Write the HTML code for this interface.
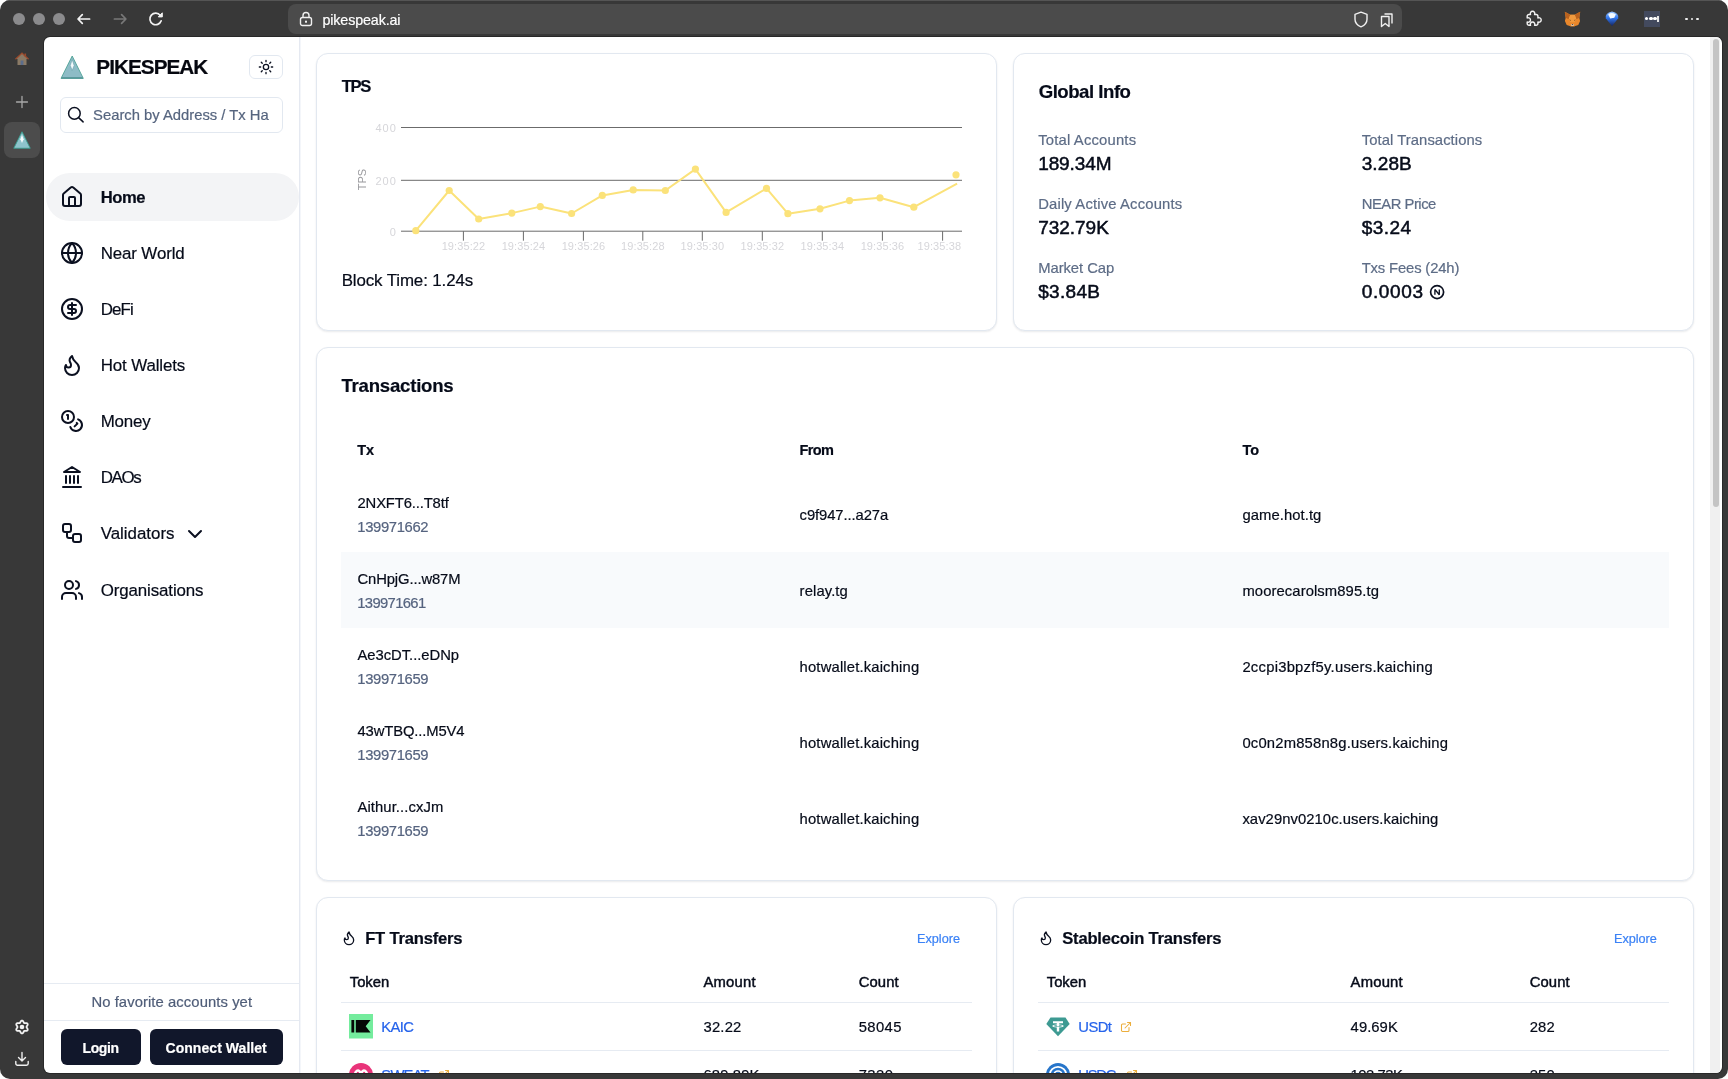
<!DOCTYPE html>
<html lang="en"><head><meta charset="utf-8"><title>Pikespeak</title>
<style>
*{box-sizing:border-box}
html,body{margin:0;padding:0;background:#fff}
body{width:1728px;height:1079px;overflow:hidden;position:relative;font-family:"Liberation Sans",sans-serif;color:#0b1020}
.abs{position:absolute}
.t{position:absolute;white-space:nowrap;line-height:20px;-webkit-text-stroke:0.2px currentColor}
.win{will-change:transform;position:absolute;left:0;top:0;width:1728px;height:1079px;background:#383838;border-radius:10px;overflow:hidden}
.page{position:absolute;left:44px;top:37px;width:1678px;height:1036px;background:#fff;border-radius:6px;overflow:hidden;box-shadow:0 0 0 1px rgba(0,0,0,.28)}
.card{position:absolute;background:#fff;border:1px solid #e2e8f0;border-radius:12px;box-shadow:0 1px 2px rgba(15,23,42,.09)}
.hl{position:absolute;height:1px;background:#e6ebf2}
svg{position:absolute;overflow:visible}
.ic{fill:none;stroke:#0b1020;stroke-width:2;stroke-linecap:round;stroke-linejoin:round}
.btn{position:absolute;background:#11172b;border-radius:6px;height:35.800px;top:1029.100px}

</style></head>
<body>
<div class="win">
<header>
<div class="abs" style="left:0;top:0;width:1728px;height:1px;background:#555"></div>
<div class="abs" style="left:13px;top:13px;width:12px;height:12px;border-radius:50%;background:#8b8b8d"></div>
<div class="abs" style="left:33px;top:13px;width:12px;height:12px;border-radius:50%;background:#8b8b8d"></div>
<div class="abs" style="left:53px;top:13px;width:12px;height:12px;border-radius:50%;background:#8b8b8d"></div>
<svg style="left:74px;top:10px" width="18" height="18" viewBox="0 0 18 18"><path d="M15.600 9H4.200M8.300 4.700 4 9l4.300 4.300" fill="none" stroke="#f2f2f2" stroke-width="1.700" stroke-linecap="round" stroke-linejoin="round"/></svg>
<svg style="left:111px;top:10px" width="18" height="18" viewBox="0 0 18 18"><path d="M3.400 9h11.300M10.600 4.700 14.900 9l-4.300 4.300" fill="none" stroke="#787878" stroke-width="1.700" stroke-linecap="round" stroke-linejoin="round"/></svg>
<svg style="left:146px;top:10px" width="18" height="18" viewBox="0 0 18 18"><path d="M14.300 5.400A5.800 5.800 0 1 0 15.200 10.800" fill="none" stroke="#f2f2f2" stroke-width="1.700" stroke-linecap="round"/><path d="M16.300 2.800V6.900H12.300z" fill="#f2f2f2" stroke="#f2f2f2" stroke-width="1" stroke-linejoin="round"/></svg>
<div class="abs" style="left:288px;top:4px;width:1114px;height:30px;border-radius:8px;background:#4b4b4b"></div>
<svg style="left:299px;top:11px" width="14" height="16" viewBox="0 0 14 16"><rect x="1.500" y="6.500" width="11" height="8" rx="2" fill="none" stroke="#f0f0f0" stroke-width="1.400"/><path d="M4 6.500V4.500a3 3 0 0 1 6 0v2" fill="none" stroke="#f0f0f0" stroke-width="1.400"/><rect x="6" y="9.700" width="2" height="2" fill="#f0f0f0"/></svg>
<span class="t" style="left:322.40px;top:10px;font-size:14.3px;color:#ffffff;letter-spacing:-0.121px;">pikespeak.ai</span>
<svg style="left:1353px;top:11px" width="16" height="17" viewBox="0 0 16 17"><path d="M8 1.200 14 3.400v4.800c0 3.600-2.500 6.200-6 7.600-3.500-1.400-6-4-6-7.600V3.400z" fill="none" stroke="#f0f0f0" stroke-width="1.400" stroke-linejoin="round"/></svg>
<svg style="left:1379px;top:11px" width="16" height="17" viewBox="0 0 16 17"><path d="M2.500 5.500h7.500v10l-3.750-3-3.750 3z" fill="none" stroke="#f0f0f0" stroke-width="1.400" stroke-linejoin="round"/><path d="M5.500 3h7.500v9.500" fill="none" stroke="#f0f0f0" stroke-width="1.400" stroke-linejoin="round"/></svg>
<svg style="left:1526.200px;top:10.800px" width="15.500" height="15.500" viewBox="2 2 13 13"><path d="M3 6.500a1.500 1.500 0 0 1 1.500-1.500H5.800a1.900 1.900 0 1 1 3.400 0H10.500a1.500 1.500 0 0 1 1.500 1.500V7.800a1.900 1.900 0 1 1 0 3.400V12.500a1.500 1.500 0 0 1-1.500 1.500H9.200a1.900 1.900 0 1 0-3.400 0H4.500a1.500 1.500 0 0 1-1.500-1.500V11.200a1.900 1.900 0 1 0 0-3.400Z" fill="none" stroke="#f2f2f2" stroke-width="1.200" stroke-linejoin="round"/></svg>
<svg style="left:1563.500px;top:11px" width="17" height="16" viewBox="0 0 17 16"><path d="M.800 .800 6.300 3.800h4.400L16.200 .800l-.900 6 .800 3.200-1.800 4-3 .900-1 .700H6.700l-1-.700-3-.900L.900 10l.800-3.200z" fill="#e9872b"/><path d="M.800 .800 6.300 3.800 4.600 8.300 1.700 6.800zM16.200 .800 10.700 3.800l1.700 4.500 2.900-1.500z" fill="#b9621f"/><path d="M6.300 3.800h4.400l1.700 4.500-1.900 3H6.500l-1.900-3z" fill="#f09a3e"/><path d="M5.200 8.600l1.700.400-.500.900zM11.800 8.600l-1.700.400.500.900z" fill="#7a4a22"/><path d="M6.800 13.300h3.400l-.500 1.500H7.300z" fill="#dfd3c3"/><path d="M7.700 13.200h1.600l-.300.800h-1z" fill="#222"/></svg>
<svg style="left:1605px;top:11px" width="14" height="15.500" viewBox="0 0 14 15.500"><defs><linearGradient id="gd" x1="0" y1="0" x2="0" y2="1"><stop offset="0" stop-color="#9cc8ff"/><stop offset=".45" stop-color="#2f74ec"/><stop offset="1" stop-color="#16245c"/></linearGradient></defs><path d="M7 15.200 .800 7.200Q-.300 2.200 7 .500 14.300 2.200 13.200 7.200z" fill="url(#gd)"/><path d="M3.200 3.500Q6 .800 10.800 3.200L9.300 6.800 5.200 7.400z" fill="#f3faff"/></svg>
<div class="abs" style="left:1644px;top:11px;width:16px;height:15.500px;background:#434a5e"></div>
<div class="abs" style="left:1645.35px;top:17.350px;width:3.100px;height:3.100px;border-radius:50%;background:#fff"></div>
<div class="abs" style="left:1649.45px;top:17.350px;width:3.100px;height:3.100px;border-radius:50%;background:#fff"></div>
<div class="abs" style="left:1653.45px;top:17.350px;width:3.100px;height:3.100px;border-radius:50%;background:#fff"></div>
<div class="abs" style="left:1657.300px;top:15.900px;width:2.200px;height:5.900px;background:#e6e6e6"></div>
<div class="abs" style="left:1685.4px;top:17.700px;width:2.600px;height:2.600px;border-radius:50%;background:#f0f0f0"></div>
<div class="abs" style="left:1690.7px;top:17.700px;width:2.600px;height:2.600px;border-radius:50%;background:#f0f0f0"></div>
<div class="abs" style="left:1696.0px;top:17.700px;width:2.600px;height:2.600px;border-radius:50%;background:#f0f0f0"></div>
</header>
<div class="strip">
<div class="abs" style="left:4px;top:122px;width:36px;height:36px;border-radius:8px;background:#4c4c4c"></div>
<svg style="left:14px;top:51px" width="16" height="16" viewBox="0 0 16 16"><path d="M8 2 1.500 8h2v6h9V8h2z" fill="#8a7a66"/><path d="M8 1.300 1 7.800l.900.900L8 3l6.100 5.700.900-.900z" fill="#9a4a2c"/><rect x="6.600" y="9.500" width="2.800" height="4.500" fill="#5b6d8c"/><rect x="10.500" y="2.500" width="1.600" height="3" fill="#9a4a2c"/></svg>
<svg style="left:15px;top:95px" width="14" height="14" viewBox="0 0 14 14"><path d="M7 1.500v11M1.500 7h11" stroke="#a8a8a8" stroke-width="1.300" fill="none" stroke-linecap="round"/></svg>
<svg style="left:13px;top:131px" width="18" height="18" viewBox="0 0 24 24"><path d="M12 1 23 23H1z" fill="#8ec4cc" stroke="#3a9d8f" stroke-width="1.200"/><path d="M12 5l2.200 6-2.200 5-2.200-5z" fill="#f4fbfc"/></svg>
<svg style="left:14px;top:1019.100px" width="16" height="16" viewBox="0 0 16 16"><path d="M8.00 1.55 L8.55 1.70 L9.04 2.12 L9.42 2.69 L9.72 3.28 L9.98 3.76 L10.27 4.06 L10.68 4.17 L11.23 4.15 L11.89 4.11 L12.58 4.16 L13.18 4.37 L13.59 4.77 L13.73 5.33 L13.61 5.96 L13.31 6.58 L12.95 7.13 L12.66 7.59 L12.55 8.00 L12.66 8.41 L12.95 8.87 L13.31 9.42 L13.61 10.04 L13.73 10.67 L13.59 11.22 L13.18 11.63 L12.58 11.84 L11.89 11.89 L11.23 11.85 L10.68 11.83 L10.28 11.94 L9.98 12.24 L9.72 12.72 L9.42 13.31 L9.04 13.88 L8.55 14.30 L8.00 14.45 L7.45 14.30 L6.96 13.88 L6.58 13.31 L6.28 12.72 L6.02 12.24 L5.72 11.94 L5.32 11.83 L4.77 11.85 L4.11 11.89 L3.42 11.84 L2.82 11.63 L2.41 11.23 L2.27 10.67 L2.39 10.04 L2.69 9.42 L3.05 8.87 L3.34 8.41 L3.45 8.00 L3.34 7.59 L3.05 7.13 L2.69 6.58 L2.39 5.96 L2.27 5.33 L2.41 4.78 L2.82 4.37 L3.42 4.16 L4.11 4.11 L4.77 4.15 L5.32 4.17 L5.73 4.06 L6.02 3.76 L6.28 3.28 L6.58 2.69 L6.96 2.12 L7.45 1.70Z" fill="none" stroke="#f2f2f2" stroke-width="1.800" stroke-linejoin="round"/><circle cx="8" cy="8" r="2.300" fill="#f2f2f2"/></svg>
<svg style="left:14px;top:1051px" width="16" height="16" viewBox="0 0 16 16"><path d="M8 1.500v8.500M4.500 6.500 8 10l3.500-3.500M1.800 10.500v2a1.700 1.700 0 0 0 1.700 1.700h9a1.700 1.700 0 0 0 1.700-1.700v-2" fill="none" stroke="#f0f0f0" stroke-width="1.400" stroke-linecap="round" stroke-linejoin="round"/></svg>
</div>
<div class="page"><div class="abs" style="left:-44px;top:-37px;width:1728px;height:1079px">
<aside>
<div class="abs" style="left:299px;top:37px;width:1px;height:1036px;background:#e5e9f1"></div>
<div class="abs" style="left:300px;top:37px;width:1px;height:1036px;background:#f4f6fa"></div>
<svg style="left:60px;top:55px" width="24" height="24" viewBox="0 0 24 24"><path d="M12.200 1 23.300 23.400H1z" fill="#8dbcc6" stroke="#3f9a8c" stroke-width=".8" stroke-linejoin="round"/><path d="M2 22.200h20.400l.700 1.300H1.200z" fill="#4c8f92"/><path d="M12.200 4.500l1.900 6-1.900 5-1.900-5z" fill="#f4fafc" stroke="#5d98a2" stroke-width=".5"/></svg>
<span class="t" style="left:96.30px;top:57px;font-size:20.7px;color:#05070f;font-weight:700;letter-spacing:-0.948px;">PIKESPEAK</span>
<div class="abs" style="left:249px;top:55px;width:34px;height:24px;border:1px solid #e2e8f0;border-radius:6px;background:#fff"></div>
<svg class="ic" style="left:258px;top:59px;stroke-width:2" width="16" height="16" viewBox="0 0 24 24"><circle cx="12" cy="12" r="4"/><path d="M12 2v2M12 20v2M4.930 4.930l1.410 1.410M17.660 17.660l1.410 1.410M2 12h2M20 12h2M6.340 17.660l-1.410 1.410M19.070 4.930l-1.410 1.410"/></svg>
<div class="abs" style="left:60px;top:97px;width:223px;height:36px;border:1px solid #e2e8f0;border-radius:6px;background:#fff"></div>
<svg style="left:60px;top:100px" width="30" height="30" viewBox="0 0 30 30"><circle cx="14.400" cy="13.400" r="5.800" fill="none" stroke="#0b1020" stroke-width="1.500"/><path d="M18.600 17.600 23.100 21.900" fill="none" stroke="#0b1020" stroke-width="1.500" stroke-linecap="round"/></svg>
<span class="t" style="left:93.10px;top:105px;font-size:14.8px;color:#56657f;letter-spacing:-0.006px;">Search by Address / Tx Ha</span>
<nav>
<div class="abs" style="left:46px;top:173px;width:253px;height:48px;border-radius:24px;background:#f3f4f6"></div>
<svg class="ic" style="left:60px;top:185.0px" width="24" height="24" viewBox="0 0 24 24"><path d="M15 21v-8a1 1 0 0 0-1-1h-4a1 1 0 0 0-1 1v8"/><path d="M3 10a2 2 0 0 1 .709-1.528l7-5.999a2 2 0 0 1 2.582 0l7 5.999A2 2 0 0 1 21 10v9a2 2 0 0 1-2 2H5a2 2 0 0 1-2-2z"/></svg>
<span class="t" style="left:100.70px;top:188px;font-size:16.6px;color:#060b19;font-weight:700;letter-spacing:-0.427px;">Home</span>
<svg class="ic" style="left:60px;top:241.0px" width="24" height="24" viewBox="0 0 24 24"><circle cx="12" cy="12" r="10"/><path d="M12 2a14.500 14.500 0 0 0 0 20 14.500 14.500 0 0 0 0-20"/><path d="M2 12h20"/></svg>
<span class="t" style="left:100.70px;top:244px;font-size:16.9px;color:#060b19;letter-spacing:-0.125px;">Near World</span>
<svg class="ic" style="left:60px;top:296.9px" width="24" height="24" viewBox="0 0 24 24"><circle cx="12" cy="12" r="10"/><path d="M16 8h-6a2 2 0 1 0 0 4h4a2 2 0 1 1 0 4H8"/><path d="M12 18V6"/></svg>
<span class="t" style="left:100.70px;top:300px;font-size:16.9px;color:#060b19;letter-spacing:-0.859px;">DeFi</span>
<svg class="ic" style="left:60px;top:353.1px" width="24" height="24" viewBox="0 0 24 24"><path d="M8.500 14.500A2.500 2.500 0 0 0 11 12c0-1.380-.500-2-1-3-1.072-2.143-.224-4.054 2-6 .500 2.500 2 4.900 4 6.500 2 1.600 3 3.500 3 5.500a7 7 0 1 1-14 0c0-1.153.433-2.294 1-3a2.500 2.500 0 0 0 2.500 2.500z"/></svg>
<span class="t" style="left:100.70px;top:356px;font-size:16.9px;color:#060b19;letter-spacing:-0.115px;">Hot Wallets</span>
<svg class="ic" style="left:60px;top:408.9px" width="24" height="24" viewBox="0 0 24 24"><circle cx="8" cy="8" r="6"/><path d="M18.090 10.370A6 6 0 1 1 10.340 18"/><path d="M7 6h1v4"/><path d="m16.710 13.880.700.710-2.820 2.820"/></svg>
<span class="t" style="left:100.70px;top:412px;font-size:16.9px;color:#060b19;letter-spacing:-0.181px;">Money</span>
<svg class="ic" style="left:60px;top:465.0px" width="24" height="24" viewBox="0 0 24 24"><path d="M3 22h18M6 18v-7M10 18v-7M14 18v-7M18 18v-7"/><path d="M12 2l8 5H4z"/></svg>
<span class="t" style="left:100.70px;top:468px;font-size:16.9px;color:#060b19;letter-spacing:-1.356px;">DAOs</span>
<svg class="ic" style="left:60px;top:520.8px" width="24" height="24" viewBox="0 0 24 24"><rect width="8" height="8" x="3" y="3" rx="2"/><path d="M7 11v4a2 2 0 0 0 2 2h4"/><rect width="8" height="8" x="13" y="13" rx="2"/></svg>
<span class="t" style="left:100.70px;top:524px;font-size:16.9px;color:#060b19;letter-spacing:-0.007px;">Validators</span>
<svg class="ic" style="left:60px;top:577.8px" width="24" height="24" viewBox="0 0 24 24"><path d="M16 21v-2a4 4 0 0 0-4-4H6a4 4 0 0 0-4 4v2"/><circle cx="9" cy="7" r="4"/><path d="M22 21v-2a4 4 0 0 0-3-3.870"/><path d="M16 3.130a4 4 0 0 1 0 7.750"/></svg>
<span class="t" style="left:100.70px;top:581px;font-size:16.9px;color:#060b19;letter-spacing:-0.115px;">Organisations</span>
<svg class="ic" style="left:183.300px;top:522.300px" width="24" height="24" viewBox="0 0 24 24"><path d="m6 9 6 6 6-6"/></svg>
</nav>
<div class="hl" style="left:44px;top:983px;width:255px"></div>
<span class="t" style="left:91.40px;top:992px;font-size:14.8px;color:#4f5d78;letter-spacing:0.083px;">No favorite accounts yet</span>
<div class="hl" style="left:44px;top:1020px;width:255px"></div>
<div class="btn" style="left:60.600px;width:80.600px"></div>
<div class="btn" style="left:149.900px;width:133px"></div>
<span class="t" style="left:82.60px;top:1038px;font-size:14.0px;color:#ffffff;font-weight:700;letter-spacing:-0.431px;">Login</span>
<span class="t" style="left:165.50px;top:1038px;font-size:14.0px;color:#ffffff;font-weight:700;letter-spacing:0.052px;">Connect Wallet</span>
</aside>
<main>
<div class="card" style="left:316px;top:53px;width:681px;height:278px"></div>
<div class="card" style="left:1013px;top:53px;width:681px;height:278px"></div>
<div class="card" style="left:316px;top:347px;width:1378px;height:534px"></div>
<div class="card" style="left:316px;top:897px;width:681px;height:300px"></div>
<div class="card" style="left:1013px;top:897px;width:681px;height:300px"></div>
<section>
<span class="t" style="left:341.70px;top:77px;font-size:16.6px;color:#060b19;font-weight:700;letter-spacing:-1.313px;">TPS</span>
<span class="t" style="left:341.70px;top:271px;font-size:16.9px;color:#060b19;letter-spacing:-0.114px;">Block Time: 1.24s</span>
<svg style="left:0;top:0" width="1728" height="1079" viewBox="0 0 1728 1079"><path d="M401 127.5H962" stroke="#6b6b6b" stroke-width="1" fill="none"/><path d="M401 180.3H962" stroke="#6b6b6b" stroke-width="1" fill="none"/><path d="M401 231.2H962" stroke="#6b6b6b" stroke-width="1" fill="none"/><path d="M463.4 231.200V240.700" stroke="#6b6b6b" stroke-width="1" fill="none"/><path d="M523.4 231.200V240.700" stroke="#6b6b6b" stroke-width="1" fill="none"/><path d="M583.4 231.200V240.700" stroke="#6b6b6b" stroke-width="1" fill="none"/><path d="M642.8 231.200V240.700" stroke="#6b6b6b" stroke-width="1" fill="none"/><path d="M702.3 231.200V240.700" stroke="#6b6b6b" stroke-width="1" fill="none"/><path d="M762.3 231.200V240.700" stroke="#6b6b6b" stroke-width="1" fill="none"/><path d="M822.3 231.200V240.700" stroke="#6b6b6b" stroke-width="1" fill="none"/><path d="M882.4 231.200V240.700" stroke="#6b6b6b" stroke-width="1" fill="none"/><path d="M942.6 231.200V240.700" stroke="#6b6b6b" stroke-width="1" fill="none"/><path d="M415.8 230.7 L449.2 190.5 L478.7 219.0 L511.8 213.1 L540.3 206.6 L571.6 213.5 L602.3 195.4 L633.2 189.9 L665.3 190.5 L695.4 169.1 L726.1 212.4 L766.5 188.4 L787.9 213.7 L820.0 208.8 L849.5 200.6 L880.0 197.8 L913.8 207.2 L957.1 183.6" stroke="#fbe27a" stroke-width="2" fill="none" stroke-linejoin="round"/><circle cx="415.8" cy="230.7" r="3.600" fill="#fbe27a"/><circle cx="449.2" cy="190.5" r="3.600" fill="#fbe27a"/><circle cx="478.7" cy="219.0" r="3.600" fill="#fbe27a"/><circle cx="511.8" cy="213.1" r="3.600" fill="#fbe27a"/><circle cx="540.3" cy="206.6" r="3.600" fill="#fbe27a"/><circle cx="571.6" cy="213.5" r="3.600" fill="#fbe27a"/><circle cx="602.3" cy="195.4" r="3.600" fill="#fbe27a"/><circle cx="633.2" cy="189.9" r="3.600" fill="#fbe27a"/><circle cx="665.3" cy="190.5" r="3.600" fill="#fbe27a"/><circle cx="695.4" cy="169.1" r="3.600" fill="#fbe27a"/><circle cx="726.1" cy="212.4" r="3.600" fill="#fbe27a"/><circle cx="766.5" cy="188.4" r="3.600" fill="#fbe27a"/><circle cx="787.9" cy="213.7" r="3.600" fill="#fbe27a"/><circle cx="820.0" cy="208.8" r="3.600" fill="#fbe27a"/><circle cx="849.5" cy="200.6" r="3.600" fill="#fbe27a"/><circle cx="880.0" cy="197.8" r="3.600" fill="#fbe27a"/><circle cx="913.8" cy="207.2" r="3.600" fill="#fbe27a"/><circle cx="956.0" cy="174.8" r="3.600" fill="#fbe27a"/><text x="395.800" y="131.9" text-anchor="end" font-size="11" fill="#d6d6da" textLength="20.3">400</text><text x="395.800" y="184.7" text-anchor="end" font-size="11" fill="#d6d6da" textLength="20.3">200</text><text x="395.800" y="235.6" text-anchor="end" font-size="11" fill="#d6d6da" textLength="6.8">0</text><text transform="translate(365.500 179.500) rotate(-90)" text-anchor="middle" font-size="11" fill="#9a9a9e">TPS</text><text x="463.4" y="250" text-anchor="middle" font-size="11" fill="#d6d6da" textLength="43.500">19:35:22</text><text x="523.4" y="250" text-anchor="middle" font-size="11" fill="#d6d6da" textLength="43.500">19:35:24</text><text x="583.4" y="250" text-anchor="middle" font-size="11" fill="#d6d6da" textLength="43.500">19:35:26</text><text x="642.8" y="250" text-anchor="middle" font-size="11" fill="#d6d6da" textLength="43.500">19:35:28</text><text x="702.3" y="250" text-anchor="middle" font-size="11" fill="#d6d6da" textLength="43.500">19:35:30</text><text x="762.3" y="250" text-anchor="middle" font-size="11" fill="#d6d6da" textLength="43.500">19:35:32</text><text x="822.3" y="250" text-anchor="middle" font-size="11" fill="#d6d6da" textLength="43.500">19:35:34</text><text x="882.4" y="250" text-anchor="middle" font-size="11" fill="#d6d6da" textLength="43.500">19:35:36</text><text x="961" y="250" text-anchor="end" font-size="11" fill="#d6d6da" textLength="43.500">19:35:38</text></svg>
</section><section>
<span class="t" style="left:1038.70px;top:82px;font-size:18.6px;color:#060b19;font-weight:700;letter-spacing:-0.482px;">Global Info</span>
<span class="t" style="left:1038.20px;top:130px;font-size:14.8px;color:#5d6c86;letter-spacing:0.189px;">Total Accounts</span>
<span class="t" style="left:1038.20px;top:154px;font-size:19.0px;color:#060b19;letter-spacing:-0.100px;-webkit-text-stroke:0.5px #060b19;">189.34M</span>
<span class="t" style="left:1038.20px;top:194px;font-size:14.8px;color:#5d6c86;letter-spacing:0.164px;">Daily Active Accounts</span>
<span class="t" style="left:1038.20px;top:218px;font-size:19.0px;color:#060b19;letter-spacing:-0.025px;-webkit-text-stroke:0.5px #060b19;">732.79K</span>
<span class="t" style="left:1038.20px;top:258px;font-size:14.8px;color:#5d6c86;letter-spacing:-0.056px;">Market Cap</span>
<span class="t" style="left:1038.20px;top:282px;font-size:19.0px;color:#060b19;letter-spacing:0.310px;-webkit-text-stroke:0.5px #060b19;">$3.84B</span>
<span class="t" style="left:1361.70px;top:130px;font-size:14.8px;color:#5d6c86;letter-spacing:0.072px;">Total Transactions</span>
<span class="t" style="left:1361.70px;top:154px;font-size:19.0px;color:#060b19;letter-spacing:0.094px;-webkit-text-stroke:0.5px #060b19;">3.28B</span>
<span class="t" style="left:1361.70px;top:194px;font-size:14.8px;color:#5d6c86;letter-spacing:-0.477px;">NEAR Price</span>
<span class="t" style="left:1361.70px;top:218px;font-size:19.0px;color:#060b19;letter-spacing:0.450px;-webkit-text-stroke:0.5px #060b19;">$3.24</span>
<span class="t" style="left:1361.70px;top:258px;font-size:14.8px;color:#5d6c86;letter-spacing:-0.143px;">Txs Fees (24h)</span>
<span class="t" style="left:1361.70px;top:282px;font-size:19.0px;color:#060b19;letter-spacing:0.655px;-webkit-text-stroke:0.5px #060b19;">0.0003</span>
<svg style="left:1429px;top:284px" width="16" height="16" viewBox="0 0 16 16"><circle cx="8.100" cy="8.100" r="6.500" fill="none" stroke="#0b1020" stroke-width="1.700"/><path d="M5.900 10.800V5.400l4.400 5.400V5.400" fill="none" stroke="#0b1020" stroke-width="1.350" stroke-linejoin="bevel"/></svg>
</section><section>
<span class="t" style="left:341.50px;top:376px;font-size:18.6px;color:#060b19;font-weight:700;letter-spacing:-0.229px;">Transactions</span>
<div class="abs" style="left:341px;top:552px;width:1328px;height:76px;background:#f8fafc"></div>
<span class="t" style="left:357.30px;top:440px;font-size:14.5px;color:#060b19;font-weight:700;letter-spacing:-0.275px;">Tx</span>
<span class="t" style="left:799.60px;top:440px;font-size:14.5px;color:#060b19;font-weight:700;letter-spacing:-0.617px;">From</span>
<span class="t" style="left:1242.60px;top:440px;font-size:14.5px;color:#060b19;font-weight:700;letter-spacing:-0.125px;">To</span>
<span class="t" style="left:357.50px;top:493px;font-size:14.8px;color:#060b19;letter-spacing:-0.137px;">2NXFT6...T8tf</span>
<span class="t" style="left:357.30px;top:517px;font-size:14.8px;color:#55637f;letter-spacing:-0.353px;">139971662</span>
<span class="t" style="left:799.60px;top:505px;font-size:14.8px;color:#060b19;letter-spacing:-0.092px;">c9f947...a27a</span>
<span class="t" style="left:1242.40px;top:505px;font-size:14.8px;color:#060b19;letter-spacing:0.076px;">game.hot.tg</span>
<span class="t" style="left:357.50px;top:569px;font-size:14.8px;color:#060b19;letter-spacing:-0.115px;">CnHpjG...w87M</span>
<span class="t" style="left:357.30px;top:593px;font-size:14.8px;color:#55637f;letter-spacing:-0.653px;">139971661</span>
<span class="t" style="left:799.60px;top:581px;font-size:14.8px;color:#060b19;letter-spacing:0.113px;">relay.tg</span>
<span class="t" style="left:1242.40px;top:581px;font-size:14.8px;color:#060b19;letter-spacing:0.097px;">moorecarolsm895.tg</span>
<span class="t" style="left:357.50px;top:645px;font-size:14.8px;color:#060b19;letter-spacing:-0.039px;">Ae3cDT...eDNp</span>
<span class="t" style="left:357.30px;top:669px;font-size:14.8px;color:#55637f;letter-spacing:-0.353px;">139971659</span>
<span class="t" style="left:799.60px;top:657px;font-size:14.8px;color:#060b19;letter-spacing:0.161px;">hotwallet.kaiching</span>
<span class="t" style="left:1242.40px;top:657px;font-size:14.8px;color:#060b19;letter-spacing:0.246px;">2ccpi3bpzf5y.users.kaiching</span>
<span class="t" style="left:357.50px;top:721px;font-size:14.8px;color:#060b19;letter-spacing:-0.126px;">43wTBQ...M5V4</span>
<span class="t" style="left:357.30px;top:745px;font-size:14.8px;color:#55637f;letter-spacing:-0.353px;">139971659</span>
<span class="t" style="left:799.60px;top:733px;font-size:14.8px;color:#060b19;letter-spacing:0.161px;">hotwallet.kaiching</span>
<span class="t" style="left:1242.40px;top:733px;font-size:14.8px;color:#060b19;letter-spacing:0.188px;">0c0n2m858n8g.users.kaiching</span>
<span class="t" style="left:357.50px;top:797px;font-size:14.8px;color:#060b19;letter-spacing:0.087px;">Aithur...cxJm</span>
<span class="t" style="left:357.30px;top:821px;font-size:14.8px;color:#55637f;letter-spacing:-0.353px;">139971659</span>
<span class="t" style="left:799.60px;top:809px;font-size:14.8px;color:#060b19;letter-spacing:0.161px;">hotwallet.kaiching</span>
<span class="t" style="left:1242.40px;top:809px;font-size:14.8px;color:#060b19;letter-spacing:0.067px;">xav29nv0210c.users.kaiching</span>
</section><section>
<svg class="ic" style="left:341px;top:930px" width="16" height="16" viewBox="0 0 24 24"><path d="M8.500 14.500A2.500 2.500 0 0 0 11 12c0-1.380-.500-2-1-3-1.072-2.143-.224-4.054 2-6 .500 2.500 2 4.900 4 6.500 2 1.600 3 3.500 3 5.500a7 7 0 1 1-14 0c0-1.153.433-2.294 1-3a2.500 2.500 0 0 0 2.500 2.500z"/></svg>
<span class="t" style="left:365.20px;top:929px;font-size:16.6px;color:#060b19;font-weight:700;letter-spacing:-0.200px;">FT Transfers</span>
<span class="t" style="left:917.00px;top:929px;font-size:12.7px;color:#3b82f6;letter-spacing:-0.013px;">Explore</span>
<span class="t" style="left:349.80px;top:972px;font-size:14.8px;color:#060b19;letter-spacing:-0.027px;-webkit-text-stroke:0.45px #060b19;">Token</span>
<span class="t" style="left:703.50px;top:972px;font-size:14.8px;color:#060b19;letter-spacing:0.211px;-webkit-text-stroke:0.45px #060b19;">Amount</span>
<span class="t" style="left:858.70px;top:972px;font-size:14.8px;color:#060b19;letter-spacing:0.123px;-webkit-text-stroke:0.45px #060b19;">Count</span>
<div class="hl" style="left:341px;top:1002px;width:631px"></div>
<div class="hl" style="left:341px;top:1050px;width:631px"></div>
<svg class="ic" style="left:1038px;top:930px" width="16" height="16" viewBox="0 0 24 24"><path d="M8.500 14.500A2.500 2.500 0 0 0 11 12c0-1.380-.500-2-1-3-1.072-2.143-.224-4.054 2-6 .500 2.500 2 4.900 4 6.500 2 1.600 3 3.500 3 5.500a7 7 0 1 1-14 0c0-1.153.433-2.294 1-3a2.500 2.500 0 0 0 2.500 2.500z"/></svg>
<span class="t" style="left:1062.20px;top:929px;font-size:16.6px;color:#060b19;font-weight:700;letter-spacing:-0.203px;">Stablecoin Transfers</span>
<span class="t" style="left:1614.10px;top:929px;font-size:12.7px;color:#3b82f6;letter-spacing:-0.063px;">Explore</span>
<span class="t" style="left:1046.80px;top:972px;font-size:14.8px;color:#060b19;letter-spacing:-0.027px;-webkit-text-stroke:0.45px #060b19;">Token</span>
<span class="t" style="left:1350.60px;top:972px;font-size:14.8px;color:#060b19;letter-spacing:0.211px;-webkit-text-stroke:0.45px #060b19;">Amount</span>
<span class="t" style="left:1529.70px;top:972px;font-size:14.8px;color:#060b19;letter-spacing:0.123px;-webkit-text-stroke:0.45px #060b19;">Count</span>
<div class="hl" style="left:1038px;top:1002px;width:631px"></div>
<div class="hl" style="left:1038px;top:1050px;width:631px"></div>
<svg style="left:349px;top:1014.200px" width="24" height="24.500" viewBox="0 0 24 24.500"><rect width="24" height="24.500" fill="#74ec9d"/><path d="M2.400 6.100h2.800v12.500H2.400zM6.800 6.100H21.500L16.700 12.300 21.500 18.600H6.800z" fill="#050805"/></svg>
<span class="t" style="left:381.30px;top:1017px;font-size:14.8px;color:#2563eb;letter-spacing:-0.597px;">KAIC</span>
<span class="t" style="left:703.50px;top:1017px;font-size:14.8px;color:#060b19;letter-spacing:0.200px;">32.22</span>
<span class="t" style="left:858.70px;top:1017px;font-size:14.8px;color:#060b19;letter-spacing:0.390px;">58045</span>
<svg style="left:349px;top:1062.500px" width="24" height="24" viewBox="0 0 24 24"><circle cx="12" cy="12" r="12" fill="#e9347a"/><path d="M6 12.500c0-3 1.400-5 3-5s2.200 1.600 3 3.300c.800-1.700 1.400-3.300 3-3.300s3 2 3 5" fill="none" stroke="#fff" stroke-width="2.600" stroke-linecap="round"/></svg>
<span class="t" style="left:381.30px;top:1065px;font-size:14.8px;color:#2563eb;letter-spacing:-0.787px;">SWEAT</span>
<svg class="ic" style="left:437.5px;top:1069px;stroke:#ecae3c;stroke-width:2.100" width="12" height="12" viewBox="0 0 24 24"><path d="M15 3h6v6"/><path d="M10 14 21 3"/><path d="M18 13v6a2 2 0 0 1-2 2H5a2 2 0 0 1-2-2V8a2 2 0 0 1 2-2h6"/></svg>
<span class="t" style="left:703.50px;top:1065px;font-size:14.8px;color:#060b19;letter-spacing:0.136px;">689.89K</span>
<span class="t" style="left:858.70px;top:1065px;font-size:14.8px;color:#060b19;letter-spacing:0.438px;">7320</span>
<svg style="left:1046px;top:1016.500px" width="24" height="20" viewBox="0 0 24 20"><path d="M4.500 .6h15l4.200 6.300L12 19.200.3 6.900z" fill="#3d9a92"/><path d="M7 4.300h10v2h-3.800v1.300c2.700.200 4.500.800 4.500 1.500s-1.800 1.300-4.500 1.500v3.900h-2.400v-3.900c-2.700-.200-4.500-.800-4.500-1.500s1.800-1.300 4.500-1.500V6.300H7zm3.800 3.900c-1.900.100-3.100.500-3.100.800s1.700.800 4.300.800 4.300-.400 4.300-.800-1.200-.700-3.100-.800v1h-2.400z" fill="#fff"/></svg>
<span class="t" style="left:1078.30px;top:1017px;font-size:14.8px;color:#2563eb;letter-spacing:-0.556px;">USDt</span>
<svg class="ic" style="left:1119.5px;top:1020.5px;stroke:#ecae3c;stroke-width:2.100" width="12" height="12" viewBox="0 0 24 24"><path d="M15 3h6v6"/><path d="M10 14 21 3"/><path d="M18 13v6a2 2 0 0 1-2 2H5a2 2 0 0 1-2-2V8a2 2 0 0 1 2-2h6"/></svg>
<span class="t" style="left:1350.60px;top:1017px;font-size:14.8px;color:#060b19;letter-spacing:0.058px;">49.69K</span>
<span class="t" style="left:1529.70px;top:1017px;font-size:14.8px;color:#060b19;letter-spacing:0.146px;">282</span>
<svg style="left:1046px;top:1062.500px" width="24" height="24" viewBox="0 0 24 24"><circle cx="12" cy="12" r="12" fill="#2775ca"/><circle cx="12" cy="12" r="8.200" fill="none" stroke="#fff" stroke-width="1.800"/><circle cx="12" cy="12" r="4" fill="none" stroke="#fff" stroke-width="1.600"/></svg>
<span class="t" style="left:1078.30px;top:1065px;font-size:14.8px;color:#2563eb;letter-spacing:-1.297px;">USDC</span>
<svg class="ic" style="left:1125.5px;top:1068.5px;stroke:#ecae3c;stroke-width:2.100" width="12" height="12" viewBox="0 0 24 24"><path d="M15 3h6v6"/><path d="M10 14 21 3"/><path d="M18 13v6a2 2 0 0 1-2 2H5a2 2 0 0 1-2-2V8a2 2 0 0 1 2-2h6"/></svg>
<span class="t" style="left:1350.60px;top:1065px;font-size:14.8px;color:#060b19;letter-spacing:-0.464px;">102.73K</span>
<span class="t" style="left:1529.70px;top:1065px;font-size:14.8px;color:#060b19;letter-spacing:0.146px;">250</span>
</section>
</main>
<div class="abs" style="left:1710px;top:37px;width:10px;height:1036px;background:#f0f0f0"></div>
<div class="abs" style="left:1713px;top:39px;width:6px;height:468px;border-radius:3px;background:#c4c4c4"></div>
</div></div>
</div>
</body></html>
